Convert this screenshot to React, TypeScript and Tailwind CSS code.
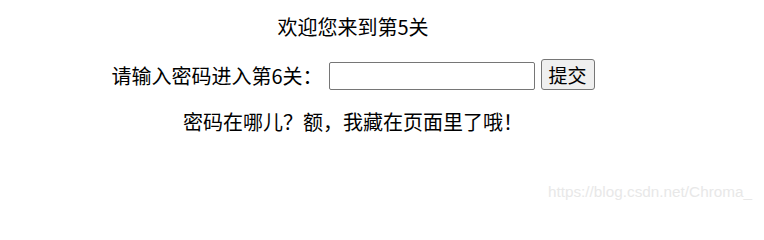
import React from "react";

export default function App() {
  return (
    <div className="relative w-[764px] h-[211px] bg-white overflow-hidden text-black" style={{ fontFamily: '"Noto Sans CJK SC", "Microsoft YaHei", sans-serif' }}>
      <div className="w-[706px] flex flex-col items-center">
        <div className="mt-[12px] text-[20px] leading-[30px]">欢迎您来到第5关</div>
        <div className="mt-[17px] flex items-end">
          <span className="text-[20px] leading-[28px] mr-[6px]">请输入密码进入第6关：</span>
          <input
            type="text"
            className="w-[206px] h-[28px] border border-[#767676] rounded-[2px] bg-white outline-none px-[2px] text-[14px]"
          />
          <button className="ml-[6px] w-[54px] h-[31px] border border-[#767676] rounded-[3px] bg-[#efefef] text-[19px] leading-[28px] text-black">
            提交
          </button>
        </div>
        <div className="mt-[17px] text-[20px] leading-[30px]">密码在哪儿？额，我藏在页面里了哦！</div>
      </div>
      <div
        className="absolute right-[12px] top-[182px] text-[15.3px] leading-[20px] text-[#e8e8e8]"
        style={{ fontFamily: '"Liberation Sans", Arial, sans-serif' }}
      >
        https://blog.csdn.net/Chroma_
      </div>
    </div>
  );
}
